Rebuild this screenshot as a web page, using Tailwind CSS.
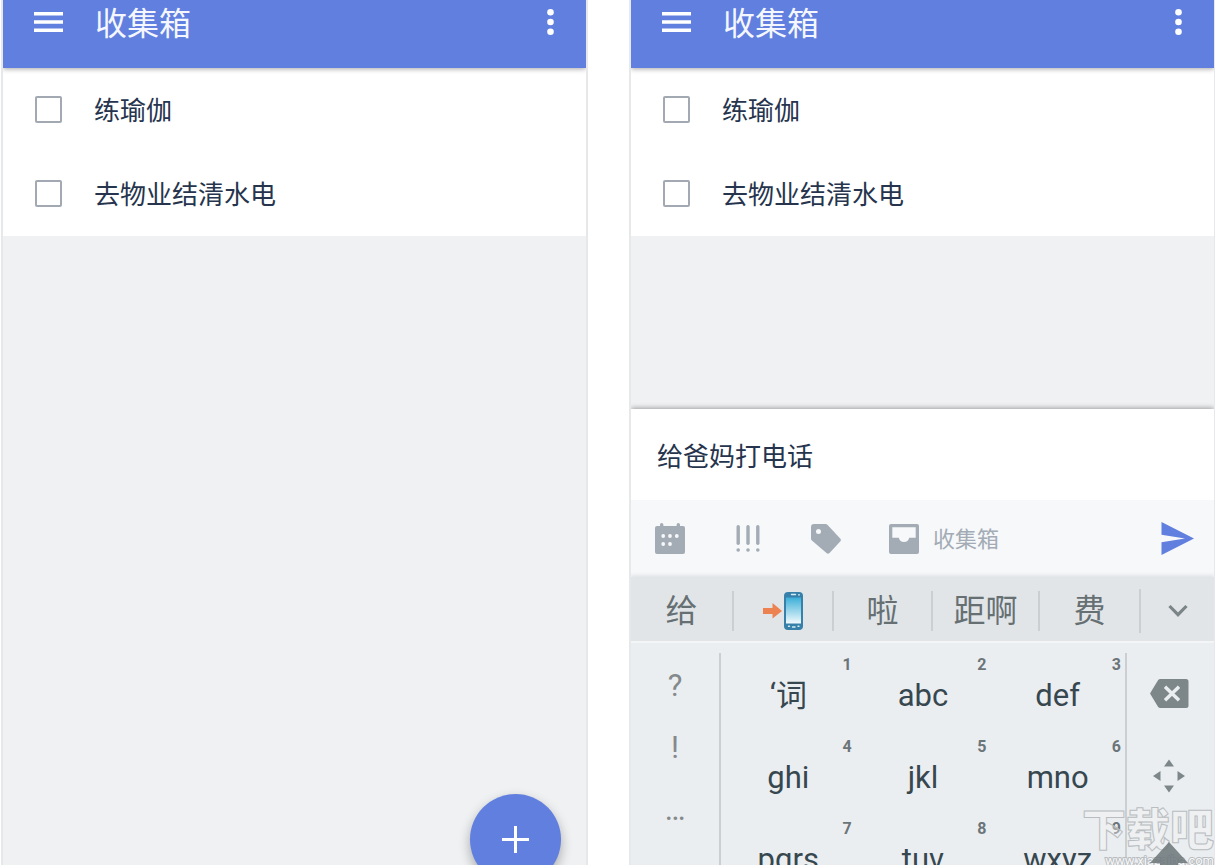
<!DOCTYPE html>
<html lang="zh-CN">
<head>
    <meta charset="UTF-8">
    <meta name="viewport" content="width=device-width, initial-scale=1.0">
    <title>收集箱</title>
    <script src="https://cdn.jsdelivr.net/npm/@tailwindcss/browser@4"></script>
</head>
<body class="bg-white h-screen overflow-hidden flex gap-[41px] pl-px font-['Roboto','Noto_Sans_CJK_SC',sans-serif]">

    <!-- Inbox list -->
    <section class="relative flex-1 min-w-0 flex flex-col overflow-hidden border-x-2 border-[#e6e8ea] bg-[#eff1f3]">
        <header class="relative z-10 shrink-0 flex items-start justify-between bg-[#617fde] pl-[31px] pr-8 pb-6 shadow-[0_1px_5px_rgba(0,0,0,0.35)]">
            <div class="flex items-center h-11 gap-8">
                <button type="button" aria-label="菜单">
                    <svg class="block" width="29" height="20" viewBox="0 0 29 20" fill="#fff"><path d="M0 0h29v3.4H0zM0 8.3h29v3.4H0zM0 16.6h29V20H0z"/></svg>
                </button>
                <h1 class="text-[32px] leading-11 pt-1 text-[#f4f7ff]">收集箱</h1>
            </div>
            <button type="button" aria-label="更多" class="h-11">
                <svg class="block" width="7" height="28" viewBox="0 0 7 28" fill="#fff"><circle cx="3.5" cy="4.2" r="3.3"/><circle cx="3.5" cy="14" r="3.3"/><circle cx="3.5" cy="23.8" r="3.3"/></svg>
            </button>
        </header>
        <ul class="shrink-0 bg-white text-[26px] text-[#26344d]">
            <li class="flex items-center h-[84px] pl-8 pb-0.5 gap-8">
                <input type="checkbox" id="a1" class="appearance-none size-[27px] border-2 border-[#a3a9b2] rounded-[2px]">
                <label for="a1" class="pt-1">练瑜伽</label>
            </li>
            <li class="flex items-center h-[84px] pl-8 pb-0.5 gap-8">
                <input type="checkbox" id="a2" class="appearance-none size-[27px] border-2 border-[#a3a9b2] rounded-[2px]">
                <label for="a2" class="pt-1">去物业结清水电</label>
            </li>
        </ul>
        <button type="button" aria-label="添加" class="absolute right-[25px] -bottom-5 size-[91px] rounded-full bg-[#617fde] flex items-center justify-center shadow-[0_5px_12px_rgba(0,0,0,0.3)]">
            <svg width="27" height="27" viewBox="0 0 27 27" fill="#fff"><path d="M12 0h3v12h12v3H15v12h-3V15H0v-3h12z"/></svg>
        </button>
    </section>

    <!-- Inbox with quick add open -->
    <section class="relative flex-1 min-w-0 -mr-px flex flex-col overflow-hidden border-x-2 border-[#e6e8ea] bg-[#eff1f3]">
        <header class="relative z-10 shrink-0 flex items-start justify-between bg-[#617fde] pl-[31px] pr-8 pb-6 shadow-[0_1px_5px_rgba(0,0,0,0.35)]">
            <div class="flex items-center h-11 gap-8">
                <button type="button" aria-label="菜单">
                    <svg class="block" width="29" height="20" viewBox="0 0 29 20" fill="#fff"><path d="M0 0h29v3.4H0zM0 8.3h29v3.4H0zM0 16.6h29V20H0z"/></svg>
                </button>
                <h1 class="text-[32px] leading-11 pt-1 text-[#f4f7ff]">收集箱</h1>
            </div>
            <button type="button" aria-label="更多" class="h-11">
                <svg class="block" width="7" height="28" viewBox="0 0 7 28" fill="#fff"><circle cx="3.5" cy="4.2" r="3.3"/><circle cx="3.5" cy="14" r="3.3"/><circle cx="3.5" cy="23.8" r="3.3"/></svg>
            </button>
        </header>
        <ul class="shrink-0 bg-white text-[26px] text-[#26344d]">
            <li class="flex items-center h-[84px] pl-8 pb-0.5 gap-8">
                <input type="checkbox" id="b1" class="appearance-none size-[27px] border-2 border-[#a3a9b2] rounded-[2px]">
                <label for="b1" class="pt-1">练瑜伽</label>
            </li>
            <li class="flex items-center h-[84px] pl-8 pb-0.5 gap-8">
                <input type="checkbox" id="b2" class="appearance-none size-[27px] border-2 border-[#a3a9b2] rounded-[2px]">
                <label for="b2" class="pt-1">去物业结清水电</label>
            </li>
        </ul>

        <form class="mt-[173px] shrink-0 shadow-[0_-1px_5px_rgba(0,0,0,0.35)]">
            <input type="text" aria-label="任务" value="给爸妈打电话" class="block w-full h-[91px] bg-white px-[26px] text-[26px] text-[#26344d] outline-none">
            <!-- Task options -->
            <div class="flex items-center h-[77px] bg-[#f6f8fa] text-[#a3abb5]">
                <button type="button" aria-label="日期" class="w-[78px] flex justify-center">
                    <svg width="30" height="32" viewBox="0 0 30 32"><path fill="currentColor" d="M2 3h3V1.700a1.700 1.700 0 0 1 3.400 0V3h13.200V1.700a1.700 1.700 0 0 1 3.400 0V3h3a2 2 0 0 1 2 2v24a2 2 0 0 1-2 2H2a2 2 0 0 1-2-2V5a2 2 0 0 1 2-2z"/><g fill="#f6f8fa"><circle cx="8.200" cy="13" r="1.900"/><circle cx="15" cy="13" r="1.900"/><circle cx="21.800" cy="13" r="1.900"/><circle cx="8.200" cy="21" r="1.900"/><circle cx="15" cy="21" r="1.900"/></g></svg>
                </button>
                <button type="button" aria-label="优先级" class="w-[78px] flex justify-center">
                    <svg width="24" height="27" viewBox="0 0 24 27" fill="currentColor"><rect x="0.500" y="0" width="3.400" height="20" rx="1.700"/><rect x="10.300" y="0" width="3.400" height="20" rx="1.700"/><rect x="20.100" y="0" width="3.400" height="20" rx="1.700"/><circle cx="2.200" cy="25" r="1.800"/><circle cx="12" cy="25" r="1.800"/><circle cx="21.800" cy="25" r="1.800"/></svg>
                </button>
                <button type="button" aria-label="标签" class="w-[78px] flex justify-center">
                    <svg width="30" height="30" viewBox="0 0 30 30"><path fill="currentColor" d="M3 0h11.500q1.200 0 2.100.9L29.200 14.500q1.400 1.500 0 3L18.500 29.100q-1.500 1.500-3 0L.9 16.500Q0 15.600 0 14.400V3Q0 0 3 0z"/><circle cx="7.500" cy="7.500" r="2.500" fill="#f6f8fa"/></svg>
                </button>
                <button type="button" class="flex items-center gap-[14px] pl-6 text-[22px]">
                    <svg width="30" height="30" viewBox="0 0 30 30" fill="currentColor"><path fill-rule="evenodd" d="M2 0h26a2 2 0 0 1 2 2v26a2 2 0 0 1-2 2H2a2 2 0 0 1-2-2V2a2 2 0 0 1 2-2zm1.300 3.300v10.500h6.500a5.300 5.300 0 0 0 10.400 0h6.500V3.300z"/></svg>
                    <span class="pt-0.5">收集箱</span>
                </button>
                <button type="submit" aria-label="发送" class="ml-auto mr-5">
                    <svg class="block" width="33" height="33" viewBox="0 0 33 33" fill="#617fde"><path d="M.5 0L33 16.500L.5 33V20.300L24 16.500L.5 12.700z"/></svg>
                </button>
            </div>
        </form>

        <!-- Candidate words -->
        <div class="shrink-0 grid grid-cols-[103fr_100fr_99fr_107fr_101fr_73fr] items-center h-16 pt-1 bg-[#e2e5e8] text-[32px] leading-10 text-[#667073] shadow-[0_-2px_3px_rgba(220,224,227,0.8)]">
            <button type="button" class="h-10 border-r-2 border-[#cbcfd2]">给</button>
            <button type="button" aria-label="来电" class="h-10 border-r-2 border-[#cbcfd2] flex items-center justify-center">
                <svg width="40" height="38" viewBox="0 0 40 38">
                    <defs><linearGradient id="screen" x1="0" y1="0" x2="0" y2="1"><stop offset="0" stop-color="#3cafd8"/><stop offset="1" stop-color="#f2fafd"/></linearGradient></defs>
                    <path fill="#ec8250" d="M0 16h9.500v-5L19 19l-9.500 7.500V22H0z"/>
                    <rect x="21" y="0" width="19" height="38" rx="4" fill="#3680aa"/>
                    <rect x="23" y="5.500" width="15" height="26" fill="url(#screen)"/>
                    <path stroke="#d7edf5" stroke-width="1.400" stroke-linecap="round" d="M28.500 2.500h4M25.500 34.300h1M29.500 35h2.500M35 34.300h1"/>
                    <circle cx="36" cy="2.800" r="0.900" fill="#d7edf5"/>
                </svg>
            </button>
            <button type="button" class="h-10 border-r-2 border-[#cbcfd2]">啦</button>
            <button type="button" class="h-10 border-r-2 border-[#cbcfd2]">距啊</button>
            <button type="button" class="h-11 border-r-2 border-[#cbcfd2]">费</button>
            <button type="button" aria-label="收起" class="flex justify-center">
                <svg width="20" height="14" viewBox="0 0 20 14" fill="none" stroke="#7b8588" stroke-width="3.200"><path d="M1.500 2L10 10.700L18.500 2"/></svg>
            </button>
        </div>

        <!-- Keyboard -->
        <div class="shrink-0 flex border-t-2 border-[#f3f5f7] bg-[#ebeef1] pt-[10px] text-[31px] text-[#37474f]">
            <div class="w-[90px] shrink-0 flex flex-col border-r-2 border-[#cbcfd2] text-[#84898c]">
                <button type="button" class="h-[62px] pt-1">?</button>
                <button type="button" class="h-[62px] pt-1">!</button>
                <button type="button" class="h-[62px] pt-1">…</button>
            </div>
            <div class="flex-1 grid grid-cols-3 auto-rows-[82px]">
                <button type="button" class="relative pt-1">‘词<span class="absolute right-1 top-0 text-base leading-6 font-bold text-[#6b7579]">1</span></button>
                <button type="button" class="relative pt-1">abc<span class="absolute right-1 top-0 text-base leading-6 font-bold text-[#6b7579]">2</span></button>
                <button type="button" class="relative pt-1">def<span class="absolute right-1 top-0 text-base leading-6 font-bold text-[#6b7579]">3</span></button>
                <button type="button" class="relative pt-1">ghi<span class="absolute right-1 top-0 text-base leading-6 font-bold text-[#6b7579]">4</span></button>
                <button type="button" class="relative pt-1">jkl<span class="absolute right-1 top-0 text-base leading-6 font-bold text-[#6b7579]">5</span></button>
                <button type="button" class="relative pt-1">mno<span class="absolute right-1 top-0 text-base leading-6 font-bold text-[#6b7579]">6</span></button>
                <button type="button" class="relative pt-1">pqrs<span class="absolute right-1 top-0 text-base leading-6 font-bold text-[#6b7579]">7</span></button>
                <button type="button" class="relative pt-1">tuv<span class="absolute right-1 top-0 text-base leading-6 font-bold text-[#6b7579]">8</span></button>
                <button type="button" class="relative pt-1">wxyz<span class="absolute right-1 top-0 text-base leading-6 font-bold text-[#6b7579]">9</span></button>
            </div>
            <div class="w-[89px] shrink-0 grid auto-rows-[82px] pr-1 border-l-2 border-[#cbcfd2]">
                <button type="button" aria-label="删除" class="flex items-center justify-center">
                    <svg width="40" height="30" viewBox="0 0 40 30"><path fill="#7d878a" d="M11.500 0H37a2.500 2.500 0 0 1 2.500 2.500v24A2.500 2.500 0 0 1 37 29H11.500Q9.800 29 9 27.800L1 14.500L9 1.200Q9.800 0 11.500 0z"/><path stroke="#ebeef1" stroke-width="3.400" d="M16 7.700l14 13.600M30 7.700L16 21.300"/></svg>
                </button>
                <button type="button" aria-label="移动光标" class="flex items-center justify-center">
                    <svg width="32" height="34" viewBox="0 0 32 34" fill="#7d878a"><path d="M16 .5l5 7H11zM16 33.500l5-7H11zM0 17l7.500-5v10zM32 17l-7.500-5v10z"/></svg>
                </button>
                <button type="button" aria-label="切换大写" class="relative z-20 flex items-center justify-center">
                    <svg width="38" height="32" viewBox="0 0 38 32" fill="#6b7579" fill-opacity="0.85"><path d="M19 0l19 21H28v11H10V21H0z"/></svg>
                </button>
            </div>
        </div>

        <!-- Site mark -->
        <div aria-hidden="true" class="absolute z-10 right-0 bottom-0 h-15 text-right pointer-events-none">
            <p class="text-[44px] leading-[52px] font-black text-[#f4f5f6]/40 [-webkit-text-stroke:1px_#b9bdc0]">下载吧</p>
            <p class="text-[13px] leading-2 text-[#f7f8f9] [-webkit-text-stroke:2px_#b9bdc0] [paint-order:stroke_fill]">www.xiazaiba.com</p>
        </div>
    </section>

</body>
</html>
